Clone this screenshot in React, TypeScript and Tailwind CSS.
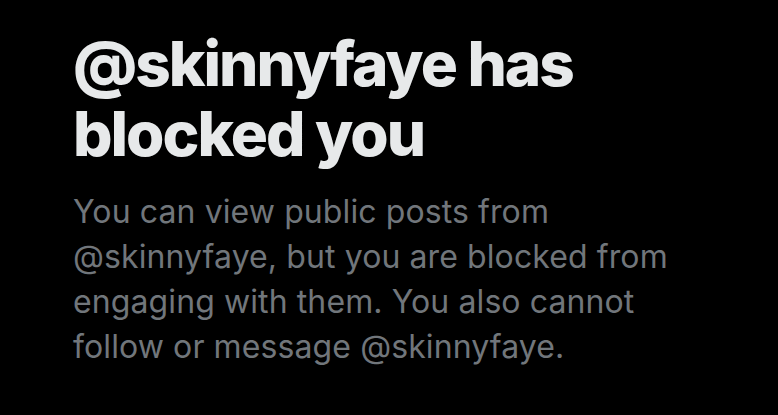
export default function App() {
  return (
    <div
      className="min-h-[415px] w-full bg-black px-[73px] pt-[29px]"
      style={{ fontFamily: "Inter, 'Noto Sans', sans-serif" }}
    >
      <h1 className="text-[62px] leading-[70px] font-extrabold text-[#e7e9ea] tracking-[-2px]">
        @skinnyfaye has
        <br />
        blocked you
      </h1>
      <p className="mt-[20px] text-[32px] leading-[45px] tracking-[0.1px] text-[#71767b]">
        You can view public posts from
        <br />
        @skinnyfaye, but you are blocked from
        <br />
        engaging with them. You also cannot
        <br />
        follow or message @skinnyfaye.
      </p>
    </div>
  );
}
